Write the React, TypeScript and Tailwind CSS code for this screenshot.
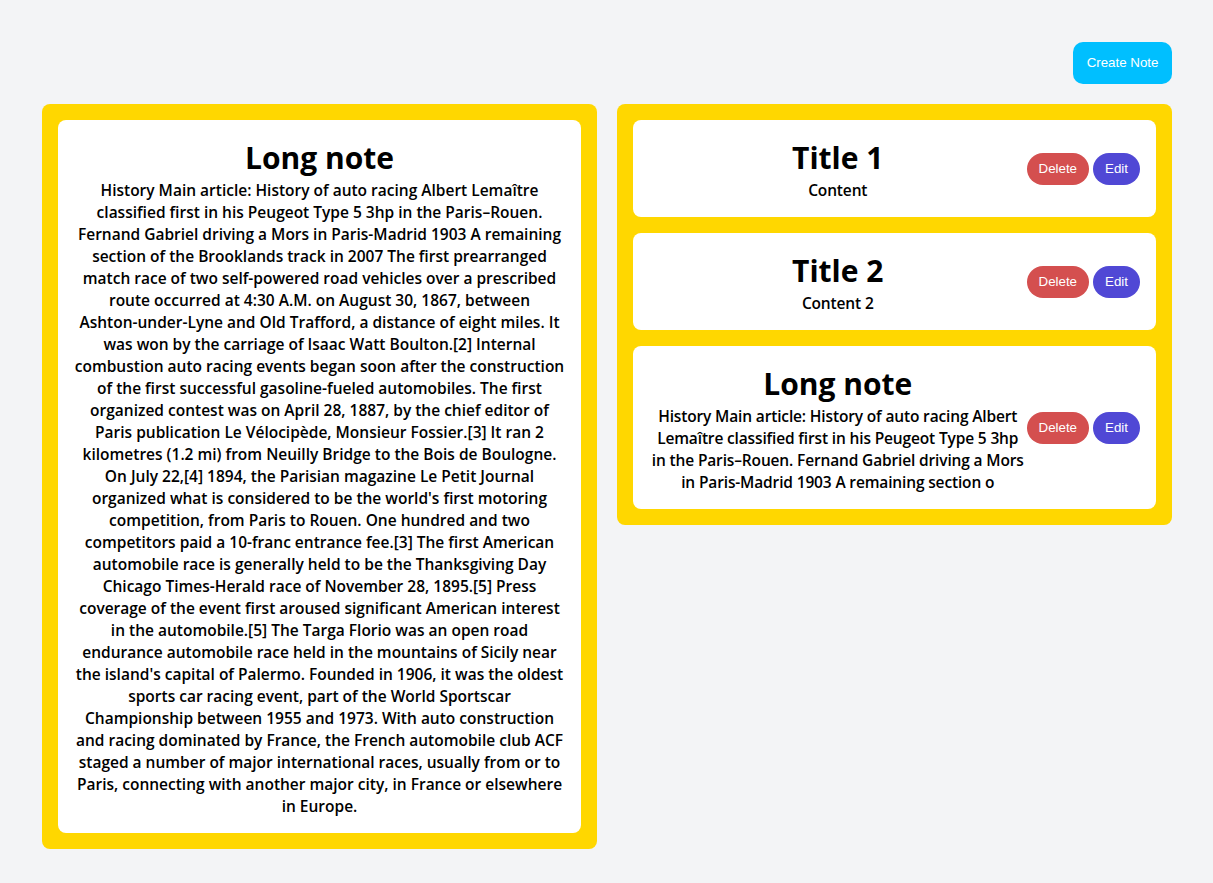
import type { ReactNode } from 'react';

interface Note {
    id: number;
    title: string;
    content: string;
}

const longText =
    "History Main article: History of auto racing Albert Lemaître classified first in his Peugeot Type 5 3hp in the Paris–Rouen. Fernand Gabriel driving a Mors in Paris-Madrid 1903 A remaining section of the Brooklands track in 2007 The first prearranged match race of two self-powered road vehicles over a prescribed route occurred at 4:30 A.M. on August 30, 1867, between Ashton-under-Lyne and Old Trafford, a distance of eight miles. It was won by the carriage of Isaac Watt Boulton.[2] Internal combustion auto racing events began soon after the construction of the first successful gasoline-fueled automobiles. The first organized contest was on April 28, 1887, by the chief editor of Paris publication Le Vélocipède, Monsieur Fossier.[3] It ran 2 kilometres (1.2 mi) from Neuilly Bridge to the Bois de Boulogne. On July 22,[4] 1894, the Parisian magazine Le Petit Journal organized what is considered to be the world's first motoring competition, from Paris to Rouen. One hundred and two competitors paid a 10-franc entrance fee.[3] The first American automobile race is generally held to be the Thanksgiving Day Chicago Times-Herald race of November 28, 1895.[5] Press coverage of the event first aroused significant American interest in the automobile.[5] The Targa Florio was an open road endurance automobile race held in the mountains of Sicily near the island's capital of Palermo. Founded in 1906, it was the oldest sports car racing event, part of the World Sportscar Championship between 1955 and 1973. With auto construction and racing dominated by France, the French automobile club ACF staged a number of major international races, usually from or to Paris, connecting with another major city, in France or elsewhere in Europe.";

const notes: Note[] = [
    { id: 1, title: 'Title 1', content: 'Content' },
    { id: 2, title: 'Title 2', content: 'Content 2' },
    { id: 3, title: 'Long note', content: longText.slice(0, 197) },
];

const btn = "h-8 rounded-full px-3 text-[13.333px] text-white font-['Liberation_Sans',Arial,sans-serif]";

// keep the town name on one line, as in the original wrap
const [before, after] = longText.split('Ashton-under-Lyne');
const longBody = (
    <>
        {before}
        <span className="whitespace-nowrap">Ashton-under-Lyne</span>
        {after}
    </>
);

function NoteBody({ title, children, tight }: { title: string; children: ReactNode; tight?: boolean }) {
    return (
        <div className="flex-1 text-center">
            <h1 className="text-[30px] font-bold leading-[43px]">{title}</h1>
            <p className={`text-[15.5px] font-semibold leading-[22px] ${tight ? 'tracking-[-0.15px]' : ''}`}>{children}</p>
        </div>
    );
}

export default function App() {
    return (
        <div className="min-h-screen bg-gray-100 pl-[42px] pr-[41px] pt-[42px] pb-8 font-['Open_Sans',sans-serif] text-black">
            <div className="flex justify-end">
                <button className="h-[42px] rounded-[10px] bg-[#00bfff] px-[13.5px] text-[13.333px] text-white font-['Liberation_Sans',Arial,sans-serif]">
                    Create Note
                </button>
            </div>

            <div className="mt-5 grid grid-cols-2 items-start gap-5">
                <div className="rounded-lg bg-[#ffd700] p-4">
                    <div className="rounded-lg bg-white p-4">
                        <NoteBody title="Long note">{longBody}</NoteBody>
                    </div>
                </div>

                <div className="flex flex-col gap-4 rounded-lg bg-[#ffd700] p-4">
                    {notes.map((note) => (
                        <div key={note.id} className="flex items-center rounded-lg bg-white p-4">
                            <NoteBody title={note.title} tight>
                                {note.content}
                            </NoteBody>
                            <div className="flex gap-1">
                                <button className={`${btn} bg-[#d44f4f]`}>Delete</button>
                                <button className={`${btn} bg-[#5048d5]`}>Edit</button>
                            </div>
                        </div>
                    ))}
                </div>
            </div>
        </div>
    );
}
